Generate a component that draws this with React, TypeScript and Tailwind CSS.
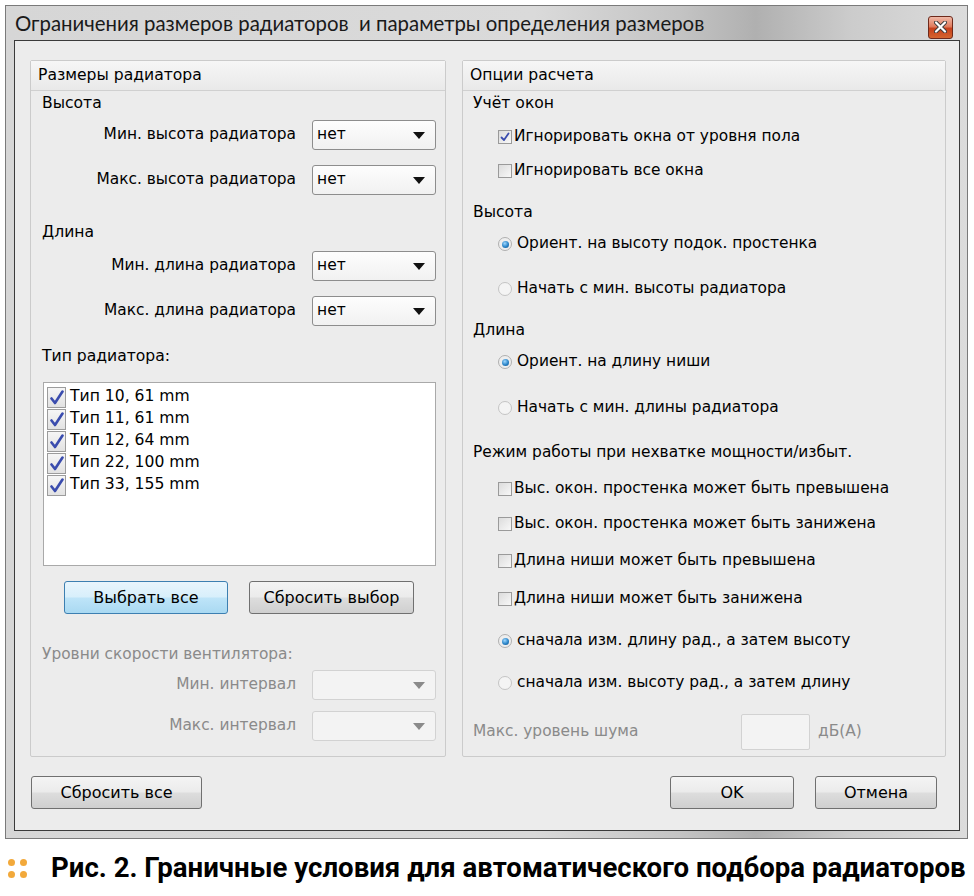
import React from "react";

const F = { fontFamily: '"DejaVu Sans", Verdana, sans-serif' };

function Combo({ value, disabled }: { value?: string; disabled?: boolean }) {
  return (
    <div
      className={
        "w-[124px] h-[30px] rounded-[3px] border flex items-center justify-between pl-[4px] pr-[10px] " +
        (disabled
          ? "border-[#d2d2d2] bg-[#f3f3f3]"
          : "border-[#8d8d8d] bg-[linear-gradient(180deg,#fdfdfd_0%,#f1f1f1_100%)]")
      }
    >
      <span className="text-[15.5px] text-black">{value ?? ""}</span>
      <svg width="12" height="7" viewBox="0 0 12 7">
        <path d="M0 0 L12 0 L6 7 Z" fill={disabled ? "#8a8a8a" : "#111"} />
      </svg>
    </div>
  );
}

function ListCheck({ label }: { label: string }) {
  return (
    <div className="flex items-center h-[22px]">
      <div className="w-[19px] h-[21px] border border-[#9c9c9c] bg-[linear-gradient(180deg,#f6f6f6,#e2e2e2)] flex items-center justify-center mr-[4px]">
        <svg width="14" height="15" viewBox="0 0 14 15">
          <path d="M1.5 8.5 L5 13 L12.5 1.5" stroke="#3a4cae" strokeWidth="2.6" fill="none" strokeLinecap="round" strokeLinejoin="round" />
        </svg>
      </div>
      <span className="text-[15.6px] text-black">{label}</span>
    </div>
  );
}

function Check({ label, checked, mt }: { label: string; checked?: boolean; mt: string }) {
  return (
    <div className={"h-[30px] flex items-center pl-[35px] " + mt}>
      <div className="w-[14px] h-[14px] border border-[#9a9a9a] bg-[linear-gradient(135deg,#dcdcdc,#f8f8f8)] flex items-center justify-center mr-[2px]">
        {checked && (
          <svg width="10" height="10" viewBox="0 0 10 10">
            <path d="M1.5 5.5 L4 8 L8.5 1.5" stroke="#3a4cae" strokeWidth="1.8" fill="none" strokeLinecap="round" strokeLinejoin="round" />
          </svg>
        )}
      </div>
      <span className="text-[15.4px] text-black">{label}</span>
    </div>
  );
}

function Radio({ label, checked, mt }: { label: string; checked?: boolean; mt: string }) {
  return (
    <div className={"h-[30px] flex items-center pl-[35px] " + mt}>
      <div
        className={
          "w-[14px] h-[14px] rounded-full border flex items-center justify-center mr-[5px] " +
          (checked ? "border-[#b0b0b0] bg-[#eeeeee]" : "border-[#c4c4c4] bg-[#f4f4f4]")
        }
      >
        {checked && (
          <div className="w-[7px] h-[7px] rounded-full bg-[radial-gradient(circle_at_40%_35%,#9fd8ff_0%,#2a84c8_55%,#124f86_100%)]" />
        )}
      </div>
      <span className="text-[15.4px] text-black">{label}</span>
    </div>
  );
}

function Btn({ label, w, blue }: { label: string; w: string; blue?: boolean }) {
  return (
    <div
      className={
        "h-[33px] rounded-[3px] border flex items-center justify-center text-[16px] text-black " +
        w +
        (blue
          ? " border-[#3c7fb1] bg-[linear-gradient(180deg,#e8f5fd_0%,#d8effb_48%,#bee4f8_52%,#a9d9f2_100%)]"
          : " border-[#707070] bg-[linear-gradient(180deg,#f4f4f4_0%,#ebebeb_48%,#dddddd_52%,#cfcfcf_100%)]")
      }
    >
      {label}
    </div>
  );
}

function Row({ label, mt, disabled, value }: { label: string; mt: string; disabled?: boolean; value?: string }) {
  return (
    <div className={"h-[30px] flex items-center justify-end gap-[16px] pr-[9px] " + mt}>
      <span className={"text-[15.4px] " + (disabled ? "text-[#8a8a8a]" : "text-black")}>{label}</span>
      <Combo value={value} disabled={disabled} />
    </div>
  );
}

function Header({ title }: { title: string }) {
  return (
    <div className="h-[30px] border-b border-[#d0d0d0] bg-[linear-gradient(180deg,#f6f6f6,#e9e9e9)] flex items-center pl-[7px] text-[15.6px] text-black">
      {title}
    </div>
  );
}

export default function App() {
  return (
    <div className="w-[974px] h-[896px] bg-white relative overflow-hidden" style={F}>
      <div className="absolute left-[5px] top-[5px] w-[963px] h-[834px] border border-[#7a7a7a] bg-[linear-gradient(90deg,#d6d6d6_0%,#dadada_55%,#c4c4c4_70%,#b0b0b0_78%,#cccccc_88%,#dcdcdc_100%)] flex flex-col">
        <div className="h-[34px] flex items-center justify-between pl-[9px] pr-[14px] shrink-0">
          <span className="text-[20.4px] text-[#1a1a1a]" style={{ fontFamily: 'Lato, "Noto Sans", sans-serif' }}>
            Ограничения размеров радиаторов&nbsp; и параметры определения размеров
          </span>
          <div className="w-[25px] h-[23px] mt-[8px] rounded-[3px] border border-[#6e2a1c] bg-[linear-gradient(180deg,#f0b9a8_0%,#e07c5e_45%,#c7401c_55%,#d5652f_100%)] flex items-center justify-center">
            <svg width="13" height="12" viewBox="0 0 13 12">
              <path d="M2 1.5 L11 10.5 M11 1.5 L2 10.5" stroke="#3b3b3b" strokeWidth="4" strokeLinecap="round" />
              <path d="M2 1.5 L11 10.5 M11 1.5 L2 10.5" stroke="#ffffff" strokeWidth="2.2" strokeLinecap="round" />
            </svg>
          </div>
        </div>
        <div className="ml-[8px] mr-[7px] h-[791px] border border-[#3a3a3a] bg-[#ececec] pt-[19px] pl-[15px] flex flex-col">
          <div className="flex gap-[16px]">
            {/* Left panel */}
            <div className="w-[416px] h-[697px] border border-[#cbcbcb] rounded-[2px] flex flex-col">
              <Header title="Размеры радиатора" />
              <div className="h-[26px] flex items-center pl-[11px] text-[15.6px]">Высота</div>
              <Row label="Мин. высота радиатора" mt="mt-[3px]" value="нет" />
              <Row label="Макс. высота радиатора" mt="mt-[15px]" value="нет" />
              <div className="h-[30px] mt-[23px] flex items-center pl-[11px] text-[15.6px]">Длина</div>
              <Row label="Мин. длина радиатора" mt="mt-[3px]" value="нет" />
              <Row label="Макс. длина радиатора" mt="mt-[15px]" value="нет" />
              <div className="h-[30px] mt-[16px] flex items-center pl-[11px] text-[15.6px]">Тип радиатора:</div>
              <div className="ml-[12px] mr-[9px] mt-[10px] h-[184px] border border-[#a9a9a9] bg-white pl-[3px] pt-[3px]">
                <ListCheck label="Тип 10, 61 mm" />
                <ListCheck label="Тип 11, 61 mm" />
                <ListCheck label="Тип 12, 64 mm" />
                <ListCheck label="Тип 22, 100 mm" />
                <ListCheck label="Тип 33, 155 mm" />
              </div>
              <div className="mt-[15px] flex justify-center gap-[21px] pl-[2px]">
                <Btn label="Выбрать все" w="w-[164px]" blue />
                <Btn label="Сбросить выбор" w="w-[165px]" />
              </div>
              <div className="h-[30px] mt-[26px] flex items-center pl-[11px] text-[15.4px] text-[#8a8a8a]">
                Уровни скорости вентилятора:
              </div>
              <Row label="Мин. интервал" mt="mt-0" disabled />
              <Row label="Макс. интервал" mt="mt-[11px]" disabled />
            </div>
            {/* Right panel */}
            <div className="w-[484px] h-[697px] border border-[#cbcbcb] rounded-[2px] flex flex-col">
              <Header title="Опции расчета" />
              <div className="h-[26px] flex items-center pl-[10px] text-[15.6px]">Учёт окон</div>
              <Check label="Игнорировать окна от уровня пола" checked mt="mt-[5px]" />
              <Check label="Игнорировать все окна" mt="mt-[4px]" />
              <div className="h-[30px] mt-[12px] flex items-center pl-[10px] text-[15.6px]">Высота</div>
              <Radio label="Ориент. на высоту подок. простенка" checked mt="mt-[1px]" />
              <Radio label="Начать с мин. высоты радиатора" mt="mt-[15px]" />
              <div className="h-[30px] mt-[12px] flex items-center pl-[10px] text-[15.6px]">Длина</div>
              <Radio label="Ориент. на длину ниши" checked mt="mt-[1px]" />
              <Radio label="Начать с мин. длины радиатора" mt="mt-[16px]" />
              <div className="h-[30px] mt-[15px] flex items-center pl-[10px] text-[15.4px]">
                Режим работы при нехватке мощности/избыт.
              </div>
              <Check label="Выс. окон. простенка может быть превышена" mt="mt-[6px]" />
              <Check label="Выс. окон. простенка может быть занижена" mt="mt-[5px]" />
              <Check label="Длина ниши может быть превышена" mt="mt-[7px]" />
              <Check label="Длина ниши может быть занижена" mt="mt-[8px]" />
              <Radio label="сначала изм. длину рад., а затем высоту" checked mt="mt-[12px]" />
              <Radio label="сначала изм. высоту рад., а затем длину" mt="mt-[12px]" />
              <div className="h-[36px] mt-[16px] flex items-center pl-[10px]">
                <span className="text-[15.4px] text-[#8a8a8a] w-[268px]">Макс. уровень шума</span>
                <div className="w-[69px] h-[36px] border border-[#d2d2d2] bg-[#f3f3f3] rounded-[2px]" />
                <span className="text-[15.4px] text-[#8a8a8a] ml-[8px]">дБ(A)</span>
              </div>
            </div>
          </div>
          <div className="mt-[19px] flex items-center pl-[1px] pr-[22px]">
            <Btn label="Сбросить все" w="w-[171px]" />
            <div className="flex-1" />
            <Btn label="OK" w="w-[124px]" />
            <div className="w-[21px]" />
            <Btn label="Отмена" w="w-[122px]" />
          </div>
        </div>
      </div>
      {/* Caption */}
      <div className="absolute left-[8px] top-[847px] flex items-center h-[42px]">
        <div className="grid grid-cols-2 gap-[5px] mr-[24px]">
          <div className="w-[7px] h-[7px] rounded-full bg-[#f2a93b]" />
          <div className="w-[7px] h-[7px] rounded-full bg-[#f2a93b]" />
          <div className="w-[7px] h-[7px] rounded-full bg-[#f2a93b]" />
          <div className="w-[7px] h-[7px] rounded-full bg-[#f2a93b]" />
        </div>
        <span
          className="text-[27.6px] font-bold text-black whitespace-nowrap"
          style={{ fontFamily: 'Roboto, "Liberation Sans", sans-serif' }}
        >
          Рис. 2. Граничные условия для автоматического подбора радиаторов
        </span>
      </div>
    </div>
  );
}
